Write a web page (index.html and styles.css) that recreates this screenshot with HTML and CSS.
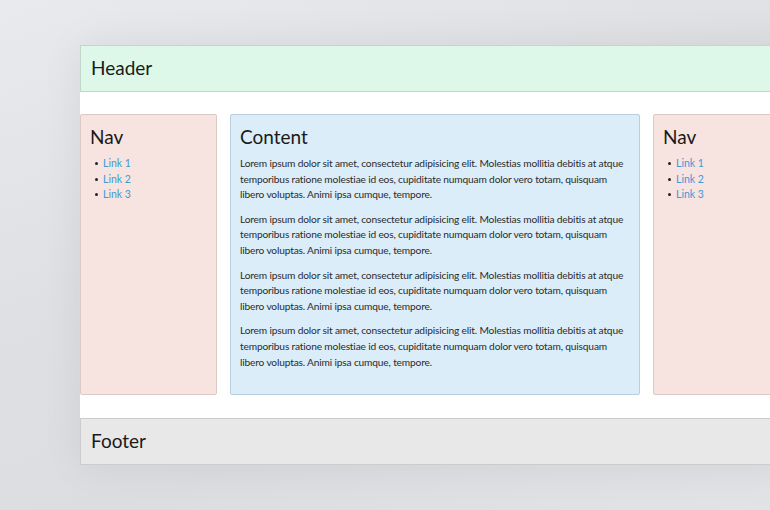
FILE: index.html
```html
<!DOCTYPE html>
<html>
<head>
<meta charset="utf-8">
<link rel="stylesheet" href="styles.css">
</head>
<body>
<div class="page">
  <header class="header"><h1>Header</h1></header>
  <div class="main">
    <nav class="box nav">
      <h2>Nav</h2>
      <ul>
        <li><a href="#">Link 1</a></li>
        <li><a href="#">Link 2</a></li>
        <li><a href="#">Link 3</a></li>
      </ul>
    </nav>
    <section class="box content">
      <h2>Content</h2>
      <p>Lorem ipsum dolor sit amet, consectetur adipisicing elit. Molestias mollitia debitis at atque temporibus ratione molestiae id eos, cupiditate numquam dolor vero totam, quisquam libero voluptas. Animi ipsa cumque, tempore.</p>
      <p>Lorem ipsum dolor sit amet, consectetur adipisicing elit. Molestias mollitia debitis at atque temporibus ratione molestiae id eos, cupiditate numquam dolor vero totam, quisquam libero voluptas. Animi ipsa cumque, tempore.</p>
      <p>Lorem ipsum dolor sit amet, consectetur adipisicing elit. Molestias mollitia debitis at atque temporibus ratione molestiae id eos, cupiditate numquam dolor vero totam, quisquam libero voluptas. Animi ipsa cumque, tempore.</p>
      <p>Lorem ipsum dolor sit amet, consectetur adipisicing elit. Molestias mollitia debitis at atque temporibus ratione molestiae id eos, cupiditate numquam dolor vero totam, quisquam libero voluptas. Animi ipsa cumque, tempore.</p>
    </section>
    <nav class="box nav">
      <h2>Nav</h2>
      <ul>
        <li><a href="#">Link 1</a></li>
        <li><a href="#">Link 2</a></li>
        <li><a href="#">Link 3</a></li>
      </ul>
    </nav>
  </div>
  <footer class="footer"><h1>Footer</h1></footer>
</div>
</body>
</html>
```

FILE: styles.css
```css
html, body {
  margin: 0;
  padding: 0;
  height: 100%;
  overflow: hidden;
}
body {
  font-family: Lato, "Open Sans", sans-serif;
  color: #2b2b2b;
  background: linear-gradient(160deg, #e9eaed 0%, #dfe0e3 40%, #dcdde0 70%, #e2e3e6 100%);
}
.page {
  margin: 45px 0 0 80px;
  width: 710px;
  background: #fff;
  box-shadow: 0 0 40px rgba(0, 0, 0, 0.07);
}
.header, .footer {
  padding: 0 10px 2px;
  display: flex;
  align-items: center;
}
.header {
  height: 43px;
  background: #ddf8e8;
  border: 1px solid #c3d6ca;
}
.footer {
  height: 43px;
  background: #e8e8e8;
  border: 1px solid #cccccc;
}
h1, h2 {
  margin: 0;
  font-weight: 400;
  font-size: 19px;
  line-height: 22px;
  color: #1a1a1a;
}
.main {
  display: grid;
  grid-template-columns: 137px 410px 137px;
  column-gap: 13px;
  padding: 22px 0 23px;
}
.box {
  height: 281px;
  box-sizing: border-box;
  border: 1px solid;
  border-radius: 2px;
  padding: 11px 9px;
}
.nav {
  background: #f7e3e0;
  border-color: #dcc8c5;
}
.content {
  background: #dbedf9;
  border-color: #b9cfdf;
}
.box h2 {
  margin: 0 0 8px;
}
.content p {
  margin: 0 0 9px;
  font-size: 10.2px;
  letter-spacing: -0.17px;
  line-height: 15.6px;
}
.nav ul {
  margin: 0;
  padding-left: 5px;
  list-style: none;
  font-size: 10.5px;
  line-height: 15.6px;
}
.nav li {
  display: flex;
  align-items: center;
}
.nav li::before {
  content: "";
  width: 3px;
  height: 3px;
  border-radius: 50%;
  background: #222;
  margin-right: 5px;
}
.nav a {
  color: #3d9ad6;
  text-decoration: none;
}
```
